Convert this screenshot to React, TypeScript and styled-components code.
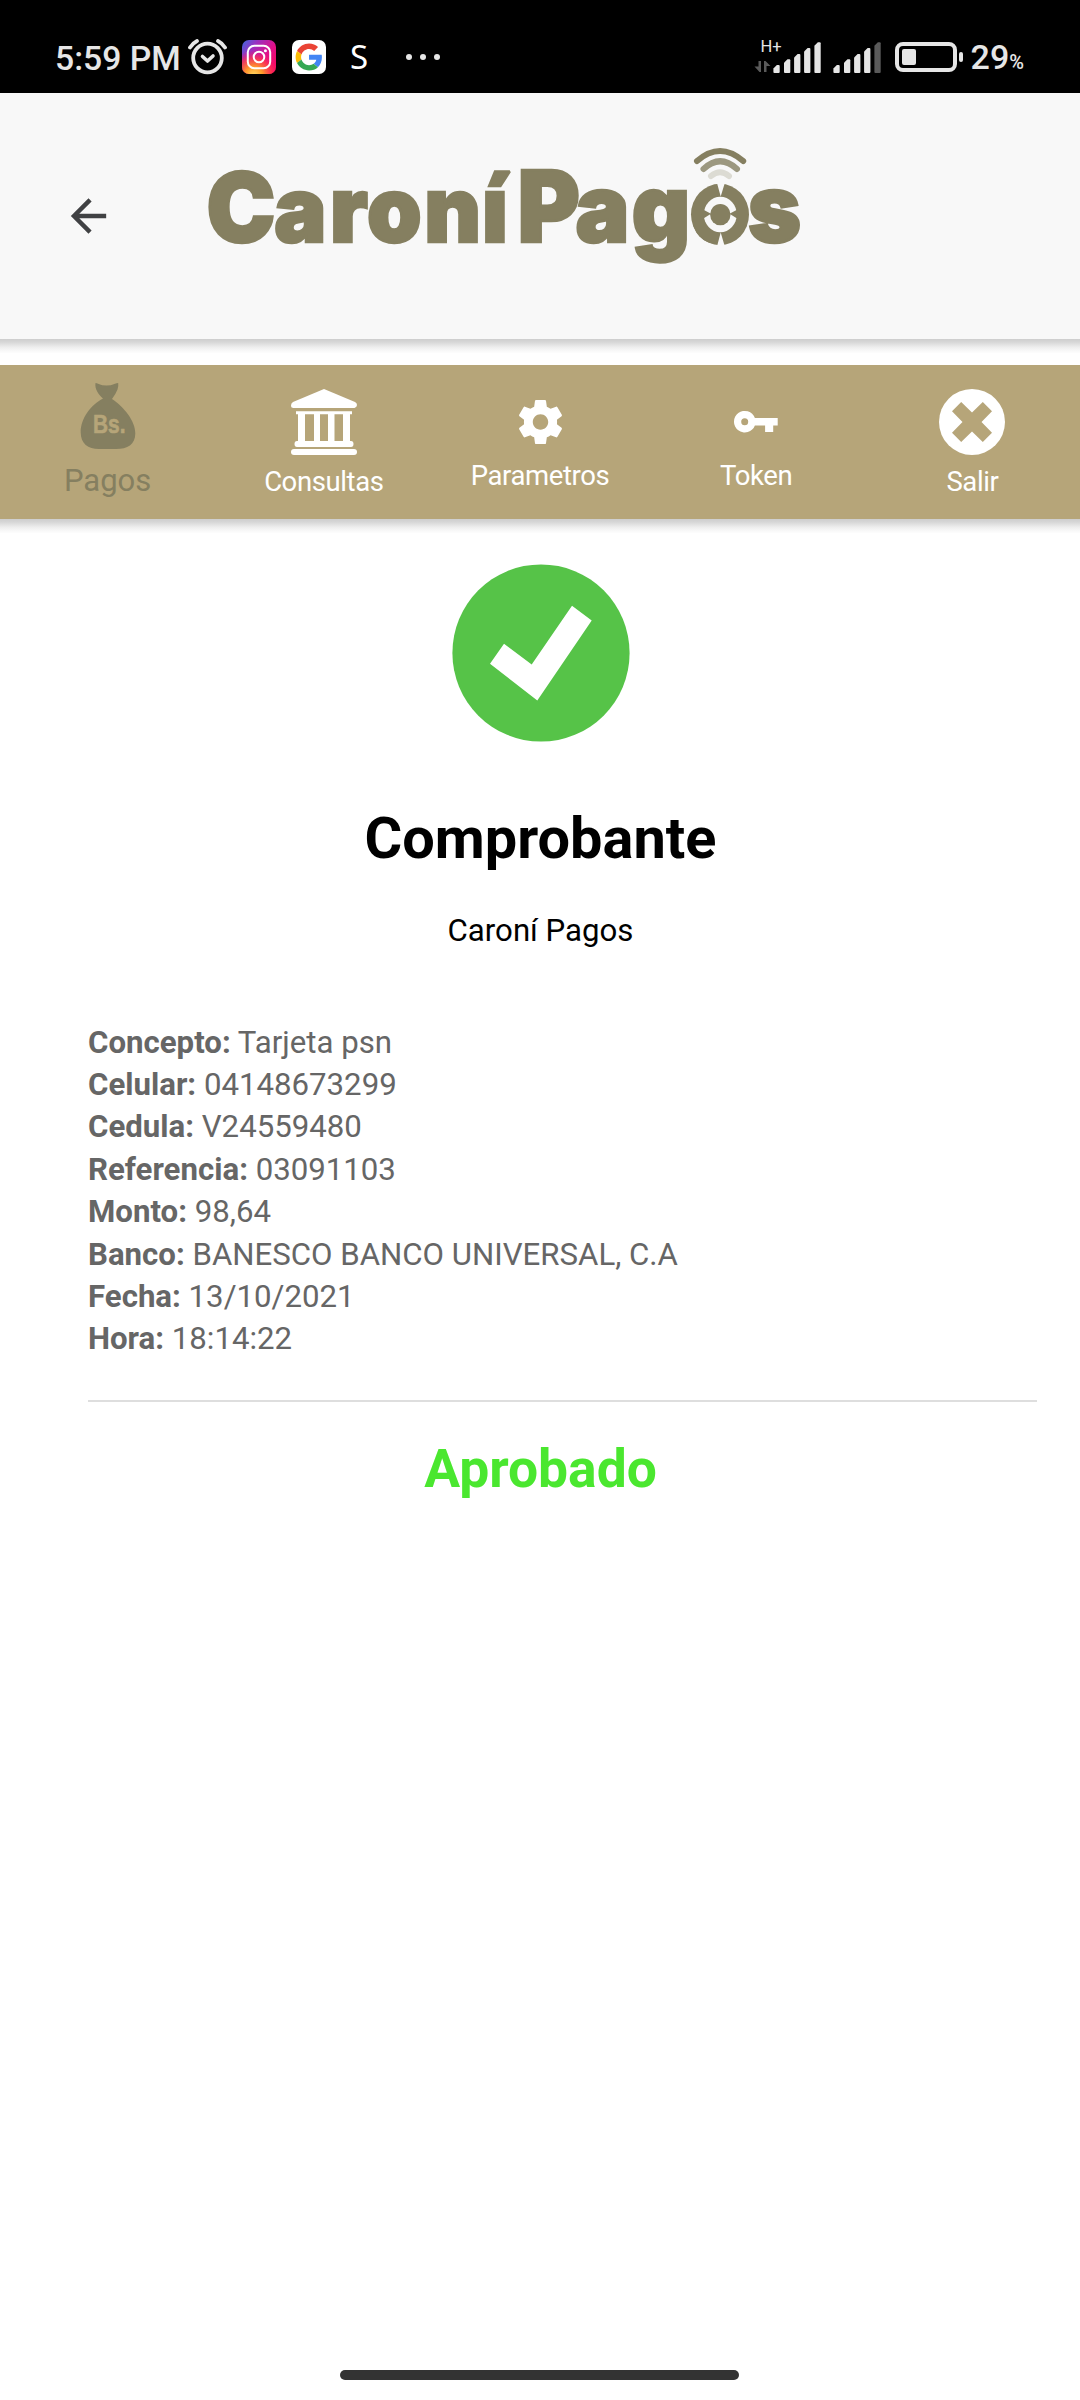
import React from "react";
import styled, { createGlobalStyle } from "styled-components";

const OLIVE = "#857f60";
const SAND = "#b6a579";

const GlobalStyle = createGlobalStyle`
  * { box-sizing: border-box; }
  body { margin: 0; background: #fff; }
`;

const Screen = styled.div`
  width: 1080px;
  height: 2400px;
  display: flex;
  flex-direction: column;
  background: #fff;
  font-family: Roboto, "Noto Sans", sans-serif;
  overflow: hidden;
`;

const StatusBar = styled.div`
  height: 93px;
  flex: none;
  display: flex;
  justify-content: space-between;
  padding: 37px 56px 0 55px;
  background: #000;
  color: #e6e6e6;
`;

const StatusGroup = styled.div`
  display: flex;
  align-items: center;
  height: 40px;
`;

const Clock = styled.span`
  width: 132px;
  font-size: 33.7px;
  font-weight: 500;
  line-height: 40px;
  white-space: nowrap;
  padding-top: 3px;
`;

const StatusGlyph = styled.span<{ $ml: number }>`
  display: block;
  height: 40px;
  line-height: 0;
  margin-left: ${(p) => p.$ml}px;
`;

const SIcon = styled.span`
  width: 20px;
  margin-left: 24px;
  font-family: "Noto Sans", sans-serif;
  font-size: 33px;
  line-height: 40px;
  color: #fff;
`;

const BatteryLevel = styled.span`
  margin-left: 7px;
  padding-top: 4px;
  font-size: 34px;
  font-weight: 500;
  line-height: 40px;
  white-space: nowrap;
`;

const Percent = styled.small`
  font-size: 20px;
`;

const Header = styled.header`
  height: 246px;
  flex: none;
  display: flex;
  background: #f8f8f8;
`;

const BackButton = styled.button`
  width: 54px;
  height: 54px;
  margin: 96px 0 0 61px;
  padding: 0;
  border: 0;
  background: none;
  line-height: 0;
`;

const Brand = styled.div`
  margin: 47px 0 0 85px;
  line-height: 0;
`;

const Shadow = styled.div<{ $h: number }>`
  flex: none;
  height: 14px;
  margin-bottom: ${(p) => p.$h - 14}px;
  background: linear-gradient(#cecece 0, #d6d6d6 3px, #ededed 8px, #f9f9f9 12px, #fdfdfd 14px);
`;

const Tabs = styled.nav`
  height: 154px;
  flex: none;
  display: flex;
  background: ${SAND};
`;

const Tab = styled.a<{ $top: number; $gap: number; $active?: boolean }>`
  flex: 1;
  display: flex;
  flex-direction: column;
  align-items: center;
  gap: ${(p) => p.$gap}px;
  padding: ${(p) => p.$top}px 0 0 ${(p) => (p.$active ? 0 : 1)}px;
  color: ${(p) => (p.$active ? OLIVE : "#fff")};
  font-size: ${(p) => (p.$active ? 31 : 27.5)}px;
  letter-spacing: ${(p) => (p.$active ? 0 : -0.4)}px;
  line-height: 34px;
  svg { display: block; }
`;

const Receipt = styled.main`
  flex: 1;
  padding: 31px 43px 0 88px;
  display: flex;
  flex-direction: column;
`;

const Centered = styled.div`
  display: flex;
  flex-direction: column;
  align-items: center;
  margin-left: -44px;
`;

const Title = styled.h1`
  margin: 61px 0 0;
  font-size: 57.7px;
  font-weight: 700;
  line-height: 70px;
  color: #000;
`;

const Subtitle = styled.p`
  margin: 37px 0 0;
  font-size: 31.2px;
  line-height: 42px;
  color: #000;
`;

const Details = styled.div`
  margin-top: 69.6px;
  font-size: 31.2px;
  line-height: 42.4px;
  color: #666;
`;

const Divider = styled.div`
  height: 2px;
  margin-top: 39.2px;
  background: #dedede;
`;

const Approved = styled.h2`
  margin: 36px 0 0;
  font-size: 53.4px;
  font-weight: 700;
  line-height: 62px;
  color: #4ae72f;
`;

const HomeIndicator = styled.div`
  flex: none;
  width: 399px;
  height: 10px;
  margin: 0 0 20px 340px;
  border-radius: 5px;
  background: #333;
`;

const AlarmIcon = () => (
  <svg width="40" height="40" viewBox="187 37 40 40" fill="none" stroke="#e6e6e6" strokeLinecap="round" strokeLinejoin="round">
    <circle cx="207.5" cy="58" r="14.3" strokeWidth="3.8" />
    <path d="M202.5 56.5l5 4.500 5.500-5" strokeWidth="3.6" />
    <path d="M190 47.500q3-4.500 7-6.500M225 47.500q-3-4.500-7-6.500" strokeWidth="3.8" />
  </svg>
);

const InstagramIcon = () => (
  <svg width="34" height="40" viewBox="0 -3 34 40">
    <defs>
      <linearGradient id="igBase" x1="0" y1="0" x2="1" y2="0.8">
        <stop offset="0" stopColor="#3b6be0" />
        <stop offset="0.3" stopColor="#9a30c0" />
        <stop offset="0.65" stopColor="#e0108a" />
        <stop offset="1" stopColor="#f5085c" />
      </linearGradient>
      <radialGradient id="igWarm" cx="0.35" cy="1.05" r="0.75">
        <stop offset="0" stopColor="#ffdc66" />
        <stop offset="0.35" stopColor="#ff9a2a" />
        <stop offset="0.7" stopColor="#ff3a4a" stopOpacity="0.75" />
        <stop offset="1" stopColor="#f5107a" stopOpacity="0" />
      </radialGradient>
    </defs>
    <rect width="34" height="34" rx="7" fill="url(#igBase)" />
    <rect width="34" height="34" rx="7" fill="url(#igWarm)" />
    <rect x="5.800" y="5.800" width="22.400" height="22.400" rx="6.500" fill="none" stroke="#fff" strokeWidth="2" />
    <circle cx="17" cy="17" r="5.300" fill="none" stroke="#fff" strokeWidth="2" />
    <circle cx="23.400" cy="10.700" r="1.500" fill="#fff" />
  </svg>
);

const GoogleIcon = () => (
  <svg width="34" height="40" viewBox="0 -3 34 40">
    <rect width="34" height="34" rx="7" fill="#fff" />
    <g transform="translate(3.600 3.600) scale(0.56)">
      <path fill="#EA4335" d="M24 9.500c3.540 0 6.710 1.220 9.210 3.600l6.850-6.850C35.900 2.380 30.470 0 24 0 14.620 0 6.510 5.380 2.560 13.220l7.980 6.190C12.430 13.720 17.740 9.500 24 9.500z" />
      <path fill="#4285F4" d="M46.980 24.550c0-1.570-.15-3.090-.38-4.550H24v9.020h12.940c-.58 2.960-2.260 5.480-4.780 7.180l7.730 6c4.510-4.180 7.090-10.360 7.090-17.650z" />
      <path fill="#FBBC05" d="M10.530 28.590c-.48-1.450-.76-2.990-.76-4.590s.27-3.140.76-4.590l-7.980-6.190C.92 16.460 0 20.120 0 24s.92 7.540 2.560 10.780l7.970-6.190z" />
      <path fill="#34A853" d="M24 48c6.480 0 11.930-2.130 15.890-5.810l-7.730-6c-2.150 1.450-4.920 2.300-8.160 2.300-6.260 0-11.570-4.220-13.470-9.910l-7.980 6.190C6.510 42.620 14.620 48 24 48z" />
    </g>
  </svg>
);

const DotsIcon = () => (
  <svg width="36" height="40" viewBox="405 37 36 40" fill="#e6e6e6">
    <circle cx="409" cy="57" r="3" />
    <circle cx="423" cy="57" r="3" />
    <circle cx="437" cy="57" r="3" />
  </svg>
);

const BAR_X = [0, 10.600, 20.700, 30.700, 41];
const BAR_TOP = [65, 59.300, 54, 48, 42.300];

const bars = (x: number, lit: number) =>
  BAR_X.map((dx, i) => (
    <path
      key={`${x}-${i}`}
      fill={i < lit ? "#e6e6e6" : "#5a5a5a"}
      d={`M${x + dx} ${BAR_TOP[i] + 3.500}l3.500-3.500h1.800q1 0 1 1V72q0 1-1 1h-4.300q-1 0-1-1z`}
    />
  ));

const SignalIcon = () => (
  <svg width="128" height="40" viewBox="754 37 128 40">
    <text x="760.500" y="52" fontFamily="Roboto, sans-serif" fontSize="16.500" fill="#e6e6e6">H+</text>
    <path fill="#5a5a5a" d="M758.500 61h2.500v11h-1.500l-5-5.500h4zM764 72V61h1.500l5 5h-4V72z" />
    {bars(773.400, 5)}
    {bars(833.400, 4)}
  </svg>
);

const BatteryIcon = () => (
  <svg width="69" height="40" viewBox="895 37 69 40">
    <rect x="897" y="44" width="58" height="26" rx="6" fill="none" stroke="#e6e6e6" strokeWidth="4" />
    <rect x="902" y="49" width="14" height="16" rx="2" fill="#e6e6e6" />
    <rect x="959" y="52" width="4" height="10" rx="2" fill="#e6e6e6" />
  </svg>
);

const BackIcon = () => (
  <svg width="53" height="54" viewBox="0 0 24 24" fill="#404143">
    <path d="M20 11H7.830l5.590-5.590L12 4l-8 8 8 8 1.410-1.410L7.830 13H20v-2z" />
  </svg>
);

const CONDENSE = 0.96;
const at = (...xs: number[]) => xs.map((x) => (x / CONDENSE).toFixed(1)).join(" ");

const Logo = () => (
  <svg width="620" height="140" viewBox="200 140 620 140" fill={OLIVE}>
    <g
      fontFamily="Inter, sans-serif"
      fontWeight="900"
      stroke={OLIVE}
      strokeWidth="2.600"
      strokeMiterlimit="2"
      transform={`scale(${CONDENSE} 1)`}
    >
      <text y="242.500">
        <tspan x={at(206.500)} fontSize="96">C</tspan>
        <tspan fontSize="91" x={at(274.300, 330, 367, 424.300, 482)}>aroní</tspan>
      </text>
      <text y="242.500">
        <tspan x={at(517.500)} fontSize="99">P</tspan>
        <tspan fontSize="94" x={at(575.500, 631.700, 691, 748)}>agos</tspan>
      </text>
    </g>
    <ellipse cx="720" cy="214.500" rx="29" ry="30.700" />
    <ellipse cx="720.300" cy="214.500" rx="16.500" ry="17.800" fill="#f8f8f8" />
    <ellipse cx="720.300" cy="214.600" rx="10.200" ry="10.700" />
    <path d="M703 209.500l8 4.200-8 5zM737.500 209.500l-8 4.200 8 5z" />
    <path fill="#f8f8f8" d="M717 183l3.700 13.500L724.800 183zM717 246.500l3.700-14 4.100 14z" />
    <g fill="none" strokeWidth="6" strokeLinecap="round">
      <path stroke={OLIVE} d="M697 161Q720 141 743.200 161" />
      <path stroke="#9c9880" d="M703.500 169Q720 153.500 737 169" />
      <path stroke="#dcdbd3" d="M711 176Q720 168.500 729 176" />
    </g>
  </svg>
);

const BagIcon = () => (
  <svg width="56" height="66" viewBox="80 383 56 66" fill={OLIVE}>
    <path d="M95.500 383q1.500 0 2.500.700 8.500 3.800 17 0 1.500-.700 3.200-.700.500 3-.700 6.500-2 5-5.500 9.500c12 8 23.300 22 23.300 34.500 0 11-7.800 15.500-19.300 15.500H99c-11 0-18.300-5.500-18.300-16.500C80.700 418 91 405 103 398.500c-4.500-4-8.500-9.500-7.500-15.500z" />
    <text x="93" y="433" textLength="32.500" lengthAdjust="spacingAndGlyphs" fontFamily='"Liberation Sans", sans-serif' fontWeight="700" fontSize="26.700" fill={SAND} stroke={SAND} strokeWidth="0.600">Bs.</text>
  </svg>
);

const BankIcon = () => (
  <svg width="66" height="66" viewBox="0 0 66 66" fill="#fff">
    <path d="M33 0L64 13q2 1 2 3t-2.500 3h-61Q0 19 0 16.500T2 13z" />
    <path d="M5 22.300h56v3h-2V52h1q2.500 0 2.500 3t-2.500 3H6q-2.500 0-2.500-3T6 52h1V25.300H5z" />
    <path fill={SAND} d="M14 25.300h9V52h-9zM29 25.300h8V52h-8zM43.500 25.300h8.500V52h-8.500z" />
    <rect y="60" width="66" height="6" rx="3" />
  </svg>
);

const GearIcon = () => (
  <svg width="53" height="54" viewBox="0 0 24 24" fill="#fff">
    <path d="M19.430 12.980c.04-.32.07-.64.07-.98s-.03-.66-.07-.98l2.110-1.650c.19-.15.24-.42.12-.64l-2-3.460c-.12-.22-.39-.3-.61-.22l-2.490 1c-.52-.4-1.080-.73-1.690-.98l-.38-2.650C14.460 2.180 14.250 2 14 2h-4c-.25 0-.46.18-.49.42l-.38 2.650c-.61.25-1.170.59-1.690.98l-2.490-1c-.23-.09-.49 0-.61.22l-2 3.460c-.13.22-.07.49.12.64l2.110 1.650c-.04.32-.07.65-.07.98s.03.66.07.98l-2.110 1.650c-.19.15-.24.42-.12.64l2 3.460c.12.22.39.3.61.22l2.490-1c.52.4 1.080.73 1.690.98l.38 2.650c.03.24.24.42.49.42h4c.25 0 .46-.18.49-.42l.38-2.650c.61-.25 1.170-.59 1.690-.98l2.490 1c.23.09.49 0 .61-.22l2-3.460c.12-.22.07-.49-.12-.64l-2.110-1.650zM12 15.500c-1.930 0-3.500-1.570-3.500-3.500s1.570-3.500 3.500-3.500 3.500 1.570 3.500 3.500-1.570 3.500-3.500 3.500z" />
  </svg>
);

const KeyIcon = () => (
  <svg width="54" height="54" viewBox="730 395 54 54" fill="#fff">
    <path fillRule="evenodd" d="M755.900 418h22.800v7.400h-4.500v6.600h-8.100v-6.600h-10.200A10.800 10.800 0 1 1 755.900 418zM745.700 418.200a3.500 3.500 0 1 0 0 7 3.500 3.500 0 0 0 0-7z" />
  </svg>
);

const CloseIcon = () => (
  <svg width="66" height="66" viewBox="940 389 66 66">
    <circle cx="973" cy="422" r="33" fill="#fff" />
    <path fill={SAND} d="M962.200 402l10.800 10.500L983.800 402l9.200 9.300-10.500 10.700L993 432.700l-9.200 9.300L973 431.500 962.200 442l-9.200-9.300 10.500-10.700L953 411.300z" />
  </svg>
);

const CheckIcon = () => (
  <svg width="178" height="178" viewBox="452 563.500 178 178">
    <circle cx="541" cy="652.500" r="88.600" fill="#56c348" />
    <path fill="#fff" d="M504 643.300l27.700 20.700L572 605.300l19.700 14.700-54.400 80-47.300-36.700z" />
  </svg>
);

const DETAILS: [string, string][] = [
  ["Concepto", "Tarjeta psn"],
  ["Celular", "04148673299"],
  ["Cedula", "V24559480"],
  ["Referencia", "03091103"],
  ["Monto", "98,64"],
  ["Banco", "BANESCO BANCO UNIVERSAL, C.A"],
  ["Fecha", "13/10/2021"],
  ["Hora", "18:14:22"],
];

export default function App() {
  return (
    <Screen>
      <GlobalStyle />
      <StatusBar>
        <StatusGroup>
          <Clock>5:59 PM</Clock>
          <StatusGlyph $ml={0}><AlarmIcon /></StatusGlyph>
          <StatusGlyph $ml={15}><InstagramIcon /></StatusGlyph>
          <StatusGlyph $ml={16}><GoogleIcon /></StatusGlyph>
          <SIcon>S</SIcon>
          <StatusGlyph $ml={35}><DotsIcon /></StatusGlyph>
        </StatusGroup>
        <StatusGroup>
          <StatusGlyph $ml={0}><SignalIcon /></StatusGlyph>
          <StatusGlyph $ml={13}><BatteryIcon /></StatusGlyph>
          <BatteryLevel>29<Percent>%</Percent></BatteryLevel>
        </StatusGroup>
      </StatusBar>
      <Header>
        <BackButton aria-label="Volver"><BackIcon /></BackButton>
        <Brand><Logo /></Brand>
      </Header>
      <Shadow $h={26} />
      <Tabs>
        <Tab $top={18} $gap={15} $active><BagIcon />Pagos</Tab>
        <Tab $top={24} $gap={10}><BankIcon />Consultas</Tab>
        <Tab $top={30} $gap={10}><GearIcon />Parametros</Tab>
        <Tab $top={30} $gap={10}><KeyIcon />Token</Tab>
        <Tab $top={24} $gap={10}><CloseIcon />Salir</Tab>
      </Tabs>
      <Shadow $h={14} />
      <Receipt>
        <Centered>
          <CheckIcon />
          <Title>Comprobante</Title>
          <Subtitle>Caroní Pagos</Subtitle>
        </Centered>
        <Details>
          {DETAILS.map(([label, value]) => (
            <div key={label}><b>{label}:</b> {value}</div>
          ))}
        </Details>
        <Divider />
        <Centered>
          <Approved>Aprobado</Approved>
        </Centered>
      </Receipt>
      <HomeIndicator />
    </Screen>
  );
}
